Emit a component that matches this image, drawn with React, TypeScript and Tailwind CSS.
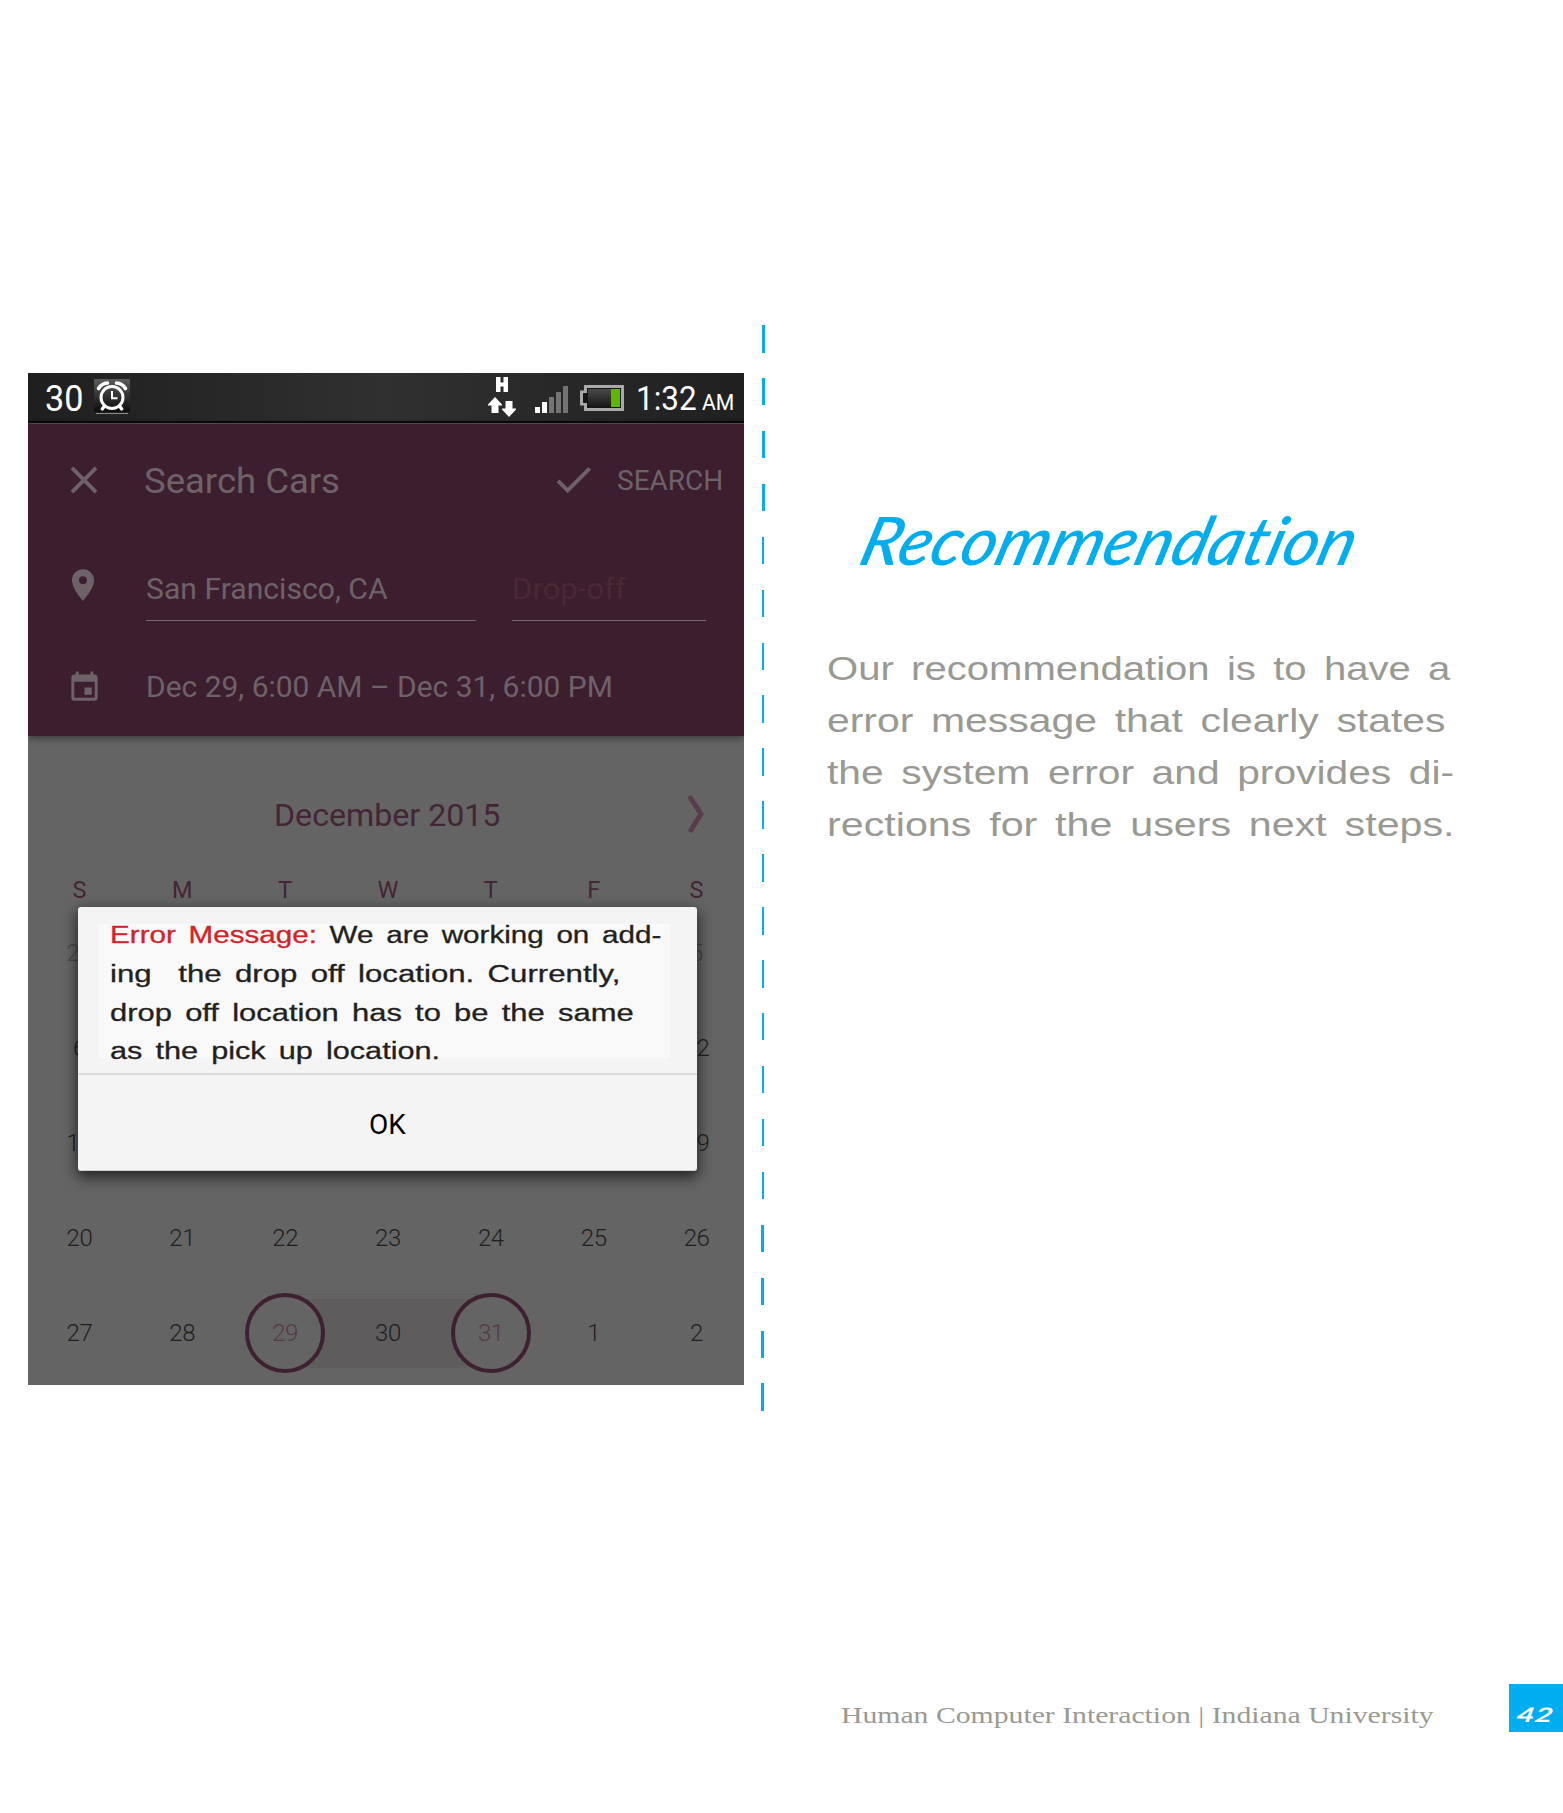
import { useLayoutEffect, useRef, useState } from "react";
import type { ReactNode } from "react";
import { MdCheck, MdClose, MdEvent, MdPlace } from "react-icons/md";

/** One line of text whose set width is stretched or condensed to a measure. */
function FitLine({ width, className = "", children }: { width: number; className?: string; children: ReactNode }) {
  const ref = useRef<HTMLSpanElement>(null);
  const [scale, setScale] = useState(1);
  useLayoutEffect(() => {
    if (ref.current) setScale(width / ref.current.offsetWidth);
  }, [width]);
  return (
    <div className={`flex shrink-0 ${className}`} style={{ width }}>
      <span ref={ref} className="shrink-0 origin-left whitespace-pre" style={{ transform: `scaleX(${scale})` }}>
        {children}
      </span>
    </div>
  );
}

function AlarmIcon() {
  return (
    <svg className="ml-[11px] h-[36px] w-[36px]" viewBox="0 0 36 36" fill="none">
      <defs>
        <linearGradient id="alarm" x1="0" y1="0" x2="0" y2="1">
          <stop offset="0" stopColor="#5c5c5c" />
          <stop offset="0.5" stopColor="#333" />
          <stop offset="1" stopColor="#0c0c0c" />
        </linearGradient>
      </defs>
      <rect x="0" y="0" width="36" height="33" rx="1" fill="url(#alarm)" />
      <path d="M2 34.5h32" stroke="#8a8a8a" />
      <circle cx="18" cy="18.5" r="11" stroke="#fff" strokeWidth="3" />
      <path d="M18 12v7.2h5.5" stroke="#fff" strokeWidth="2" />
      <path d="M4.5 9.5Q7.5 4.5 13.5 4M31.5 9.5Q28.5 4.5 22.5 4" stroke="#fff" strokeWidth="3.6" strokeLinecap="round" />
      <path d="M10.5 27l-2.2 3M25.5 27l2.2 3" stroke="#fff" strokeWidth="3.4" strokeLinecap="round" />
    </svg>
  );
}

function NetworkIcon() {
  return (
    <svg className="h-[40px] w-[28px]" viewBox="0 0 28 40" fill="#fff">
      <path d="M8 0h4.500v5.500h3V0H20v15h-4.500V9.500h-3V15H8z" />
      <path d="M7 20l7 7.500v1h-3.500v7.500h-7v-7.500H0v-1z" />
      <path d="M17.500 24h7v7.500H28v1l-7 7.500-7-7.500v-1h3.500z" />
    </svg>
  );
}

function BatteryIcon() {
  return (
    <svg className="mt-px ml-3 h-[26px] w-[44px]" viewBox="0 0 44 26">
      <defs>
        <linearGradient id="cell" x1="0" y1="0" x2="0" y2="1">
          <stop offset="0" stopColor="#4a4a4a" />
          <stop offset="1" stopColor="#171717" />
        </linearGradient>
      </defs>
      <path d="M4 0h40v26H4v-5.500H0v-15h4z" fill="#a9aaa8" />
      <path d="M7 3h34v20H7v-5H3V8h4z" fill="#151515" />
      <path d="M8 4h23v18H8z" fill="url(#cell)" />
      <path d="M31 4h9v18h-9z" fill="#5cb800" />
    </svg>
  );
}

function StatusBar() {
  return (
    <div className="flex h-[50px] items-center border-b-2 border-[#0a0a0a] bg-linear-to-r from-[#1e1f1e] via-[#2f302f] to-[#1f201f] text-white">
      <FitLine width={38} className="mt-[3px] ml-[17px] text-[36px] leading-[48px]">30</FitLine>
      <AlarmIcon />
      <div className="ml-[358px] flex items-center">
        <NetworkIcon />
        <div className="mt-[4px] ml-[19px] flex h-[27px] items-end gap-[2px]">
          <i className="h-[6px] w-[5px] bg-white" />
          <i className="h-[11px] w-[5px] bg-white" />
          <i className="h-[16px] w-[5px] bg-[#747474]" />
          <i className="h-[21px] w-[5px] bg-[#747474]" />
          <i className="h-[27px] w-[5px] bg-[#747474]" />
        </div>
        <BatteryIcon />
        <div className="mt-[4px] ml-[12px] flex items-baseline">
          <FitLine width={61} className="text-[33px] leading-[46px]">1:32</FitLine>
          <FitLine width={32} className="ml-[5px] text-[22.5px]">AM</FitLine>
        </div>
      </div>
    </div>
  );
}

function SearchHeader() {
  return (
    <div className="relative h-[313px] border-t border-[#55464f] bg-[#3d1e2f] text-[#6e6269] shadow-[0_2px_7px_rgba(0,0,0,0.45)]">
      <div className="flex h-[114px] items-center">
        <MdClose className="-mt-[3px] ml-[33px] size-[46px]" />
        <FitLine width={196} className="mt-[2px] ml-[37px] text-[35px]">Search Cars</FitLine>
        <MdCheck className="-mt-[3px] ml-[210px] size-[47px]" />
        <FitLine width={106} className="ml-[20px] text-[28px]">SEARCH</FitLine>
      </div>
      <div className="mt-[19px] flex h-[64px]">
        <MdPlace className="mt-[9px] ml-[36px] size-[38px]" />
        <div className="ml-[44px] w-[330px] border-b border-[#75676f]">
          <FitLine width={242} className="text-[30px] leading-[63px]">San Francisco, CA</FitLine>
        </div>
        <div className="ml-9 w-[194px] border-b border-[#75676f] text-[#4a2834]">
          <FitLine width={114} className="text-[30px] leading-[63px]">Drop-off</FitLine>
        </div>
      </div>
      <div className="mt-[43px] flex h-[46px] items-center">
        <MdEvent className="mt-px ml-[39px] size-[35px]" />
        <FitLine width={467} className="ml-[44px] text-[29.5px]">Dec 29, 6:00 AM – Dec 31, 6:00 PM</FitLine>
      </div>
    </div>
  );
}

const weekdays = ["S", "M", "T", "W", "T", "F", "S"];
/** The dialog hides the middle of the first three weeks. */
const weeks = [
  [29, null, null, null, null, null, 5],
  [6, null, null, null, null, null, 12],
  [13, null, null, null, null, null, 19],
  [20, 21, 22, 23, 24, 25, 26],
  [27, 28, 29, 30, 31, 1, 2],
];

function Day({ value, week, col }: { value: number | null; week: number; col: number }) {
  const last = week === 4;
  const picked = last && (col === 2 || col === 4);
  return (
    <div className="relative flex items-center justify-center">
      {last && col >= 2 && col <= 4 && (
        <div
          className={`absolute top-[9px] h-[75px] border-t border-[#5d5d5d] pt-1 ${
            col === 2 ? "right-0 left-1/2" : col === 4 ? "right-1/2 left-0" : "inset-x-0"
          }`}
        >
          <div className="h-[69px] bg-[#5f5c5d]" />
        </div>
      )}
      <span
        className={
          picked
            ? "relative flex size-[80px] shrink-0 items-center justify-center rounded-full border-4 border-[#3f2031] bg-[#646464] text-[#563848]"
            : week === 0
              ? "text-[#474747]"
              : "relative text-[#1e1e1e]"
        }
      >
        {value}
      </span>
    </div>
  );
}

function Calendar() {
  return (
    <div className="h-[649px] bg-[#646464]">
      <div className="flex h-[103px] items-end justify-end pr-[40px] text-[#442536]">
        <FitLine width={226} className="mr-[187px] text-[32px] leading-[48px]">December 2015</FitLine>
        <svg className="mb-[6px] h-[38px] w-[17px]" viewBox="0 0 17 38" fill="none">
          <path d="M3.5 3L14 19 4 35" stroke="#593c4b" strokeWidth="5" strokeLinecap="round" />
        </svg>
      </div>
      <div className="mt-[34px] grid h-[33px] w-[720px] grid-cols-7 items-center text-center text-[23.5px] text-[#432535]">
        {weekdays.map((d, i) => (
          <span key={i}>{d}</span>
        ))}
      </div>
      <div className="-mt-px grid h-[475px] w-[720px] grid-cols-7 grid-rows-5 text-[24px] font-light tracking-[-0.4px]">
        {weeks.flatMap((week, w) => week.map((v, c) => <Day key={`${w}-${c}`} value={v} week={w} col={c} />))}
      </div>
    </div>
  );
}

function ErrorDialog() {
  return (
    <div className="absolute top-[534px] left-[50px] h-[264px] w-[619px] rounded-[3px] border-b border-[#cfcfcf] bg-[#f4f4f4] shadow-[0_5px_14px_1px_rgba(0,0,0,0.65)]">
      <div className="h-[168px] border-b-2 border-[#dadada] pt-[17px] pl-[21px]">
        <div className="h-[134px] w-[571px] bg-[#f9f9f9] pl-[11px] font-['Liberation_Sans',sans-serif] text-[23.5px] leading-[38.8px] text-[#231f20] [-webkit-text-stroke:0.3px] [word-spacing:3.5px]">
          <FitLine width={551} className="-translate-y-[8px]">
            <span className="text-[#d2232a]">Error Message:</span> We are working on add-
          </FitLine>
          <FitLine width={511} className="-translate-y-[8px]">{"ing  the drop off location. Currently,"}</FitLine>
          <FitLine width={524} className="-translate-y-[8px]">drop off location has to be the same</FitLine>
          <FitLine width={330} className="-translate-y-[8px]">as the pick up location.</FitLine>
        </div>
      </div>
      <button className="flex h-[100px] w-full items-center justify-center text-[28px] text-black">
        <FitLine width={37}>OK</FitLine>
      </button>
    </div>
  );
}

function DashedDivider() {
  return (
    <div className="mt-[325px] ml-[17px] flex h-[1086px] w-[3px] flex-col items-end justify-between">
      {Array.from({ length: 21 }, (_, i) => (
        <i key={i} className={`h-[27.5px] bg-[#00aeef] ${i < 4 ? "w-[3px] translate-x-px" : i < 17 ? "w-[2px]" : "w-[3px]"}`} />
      ))}
    </div>
  );
}

export default function App() {
  return (
    <div className="flex h-[1813px] w-[1563px] flex-col overflow-hidden bg-white font-['Roboto',sans-serif]">
      <main className="flex h-[1684px]">
        <section className="relative mt-[373px] ml-7 h-[1012px] w-[716px] overflow-hidden">
          <StatusBar />
          <SearchHeader />
          <Calendar />
          <ErrorDialog />
        </section>
        <DashedDivider />
        <article className="mt-[496px] ml-[63px] w-[640px]">
          <h1 className="ml-[37px] -skew-x-[16deg] font-['Lato',sans-serif] text-[67px] leading-[86px] font-medium text-[#00aeef] italic [font-variant-ligatures:none]">
            <FitLine width={494}>Recommendation</FitLine>
          </h1>
          <div className="mt-[61px] font-['Liberation_Sans',sans-serif] text-[32.5px] leading-[52px] text-[#999993] [word-spacing:5px]">
            <FitLine width={624}>Our recommendation is to have a</FitLine>
            <FitLine width={618}>error message that clearly states</FitLine>
            <FitLine width={627}>the system error and provides di-</FitLine>
            <FitLine width={628}>rections for the users next steps.</FitLine>
          </div>
        </article>
      </main>
      <footer className="flex h-[48px] justify-end">
        <FitLine width={593} className="mr-[75px] font-['Liberation_Serif',serif] text-[24px] leading-[62px] text-[#999993]">
          Human Computer Interaction | Indiana University
        </FitLine>
        <div className="flex w-[54px] justify-center bg-[#00aeef] font-['Lato',sans-serif] text-[20px] leading-[60px] font-bold text-white italic">
          <FitLine width={36} className="-skew-x-[10deg]">42</FitLine>
        </div>
      </footer>
    </div>
  );
}
